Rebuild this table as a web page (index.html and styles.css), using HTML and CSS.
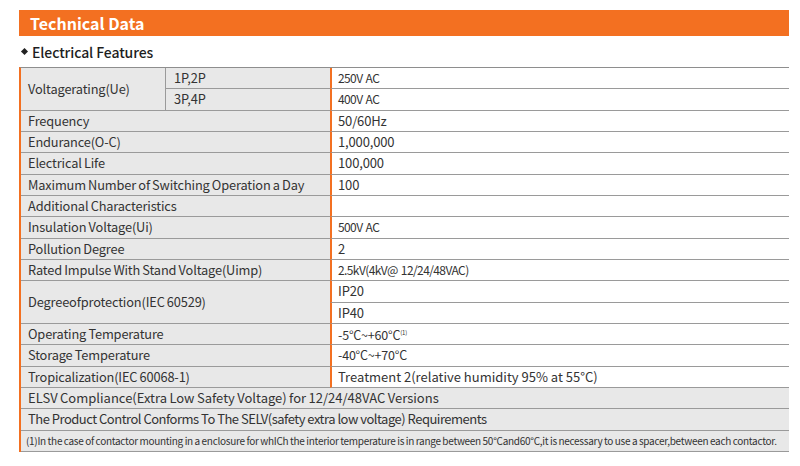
FILE: index.html
```html
<!DOCTYPE html>
<html>
<head>
<meta charset="utf-8">
<link rel="stylesheet" href="styles.css">
</head>
<body>
<div class="page">
  <div class="banner">Technical Data</div>
  <div class="subhead"><span class="diamond"></span>Electrical Features</div>
  <table class="spec">
    <colgroup>
      <col class="c1"><col class="c2"><col class="c3">
    </colgroup>
    <tr><td class="lbl" rowspan="2">Voltagerating(Ue)</td><td class="lbl sub">1P,2P</td><td class="val cond">250V AC</td></tr>
    <tr><td class="lbl sub">3P,4P</td><td class="val cond">400V AC</td></tr>
    <tr><td class="lbl" colspan="2">Frequency</td><td class="val">50/60Hz</td></tr>
    <tr><td class="lbl" colspan="2">Endurance(O-C)</td><td class="val">1,000,000</td></tr>
    <tr><td class="lbl" colspan="2">Electrical Life</td><td class="val">100,000</td></tr>
    <tr><td class="lbl" colspan="2">Maximum Number of Switching Operation a Day</td><td class="val">100</td></tr>
    <tr><td class="lbl" colspan="2">Additional Characteristics</td><td class="val"></td></tr>
    <tr><td class="lbl" colspan="2">Insulation Voltage(Ui)</td><td class="val cond">500V AC</td></tr>
    <tr><td class="lbl" colspan="2">Pollution Degree</td><td class="val">2</td></tr>
    <tr><td class="lbl" colspan="2">Rated Impulse With Stand Voltage(Uimp)</td><td class="val cond">2.5kV(4kV@ 12/24/48VAC)</td></tr>
    <tr><td class="lbl" colspan="2" rowspan="2">Degreeofprotection(IEC 60529)</td><td class="val">IP20</td></tr>
    <tr><td class="val">IP40</td></tr>
    <tr><td class="lbl" colspan="2">Operating Temperature</td><td class="val temp">-5°C~+60°C<sup>(1)</sup></td></tr>
    <tr><td class="lbl" colspan="2">Storage Temperature</td><td class="val temp">-40°C~+70°C</td></tr>
    <tr><td class="lbl" colspan="2">Tropicalization(IEC 60068-1)</td><td class="val big">Treatment 2(relative humidity 95% at 55°C)</td></tr>
    <tr><td class="lbl wide" colspan="3">ELSV Compliance(Extra Low Safety Voltage) for 12/24/48VAC Versions</td></tr>
    <tr><td class="lbl wide tight" colspan="3">The Product Control Conforms To The SELV(safety extra low voltage) Requirements</td></tr>
    <tr><td class="lbl note" colspan="3">(1)In the case of contactor mounting in a enclosure for whICh the interior temperature is in range between 50°Cand60°C,it is necessary to use a spacer,between each contactor.</td></tr>
  </table>
</div>
</body>
</html>
```
FILE: styles.css
```css
html, body {
  margin: 0;
  padding: 0;
  background: #ffffff;
}
body {
  font-family: "Noto Sans CJK SC", "Noto Sans", sans-serif;
  color: #333333;
}
.page {
  width: 770px;
  padding: 10px 0 0 19px;
}
.banner {
  background: #f37021;
  color: #ffffff;
  height: 26px;
  line-height: 26px;
  font-size: 16px;
  font-weight: 700;
  padding-left: 11px;
}
.subhead {
  display: flex;
  align-items: center;
  height: 31px;
  font-size: 14px;
  font-weight: 500;
  color: #1e1e1e;
  padding-left: 3px;
  letter-spacing: -0.1px;
}
.diamond {
  width: 5px;
  height: 5px;
  background: #222;
  transform: rotate(45deg);
  margin-right: 5px;
}
.spec {
  width: 770px;
  border-collapse: separate;
  border-spacing: 0;
  border-top: 1px solid #8e8e8e;
  border-left: 2px solid #f37021;
  table-layout: fixed;
}
.c1 { width: 144px; }
.c2 { width: 165px; }
.c3 { width: 459px; }
.spec td {
  height: 20.33px;
  padding: 0;
  border-bottom: 1px solid #9a9a9a;
  font-size: 12.8px;
  line-height: 16px;
  white-space: nowrap;
  vertical-align: middle;
  letter-spacing: -0.15px;
  word-spacing: -0.5px;
}
.lbl {
  background: #e8e8e8;
  padding-left: 7px !important;
}
.sub {
  border-left: 1px solid #9a9a9a;
  padding-left: 8px !important;
}
.val {
  background: #ffffff;
  border-left: 2px solid #f37021;
  padding-left: 6px !important;
  font-size: 13px !important;
  word-spacing: 0 !important;
}
.cond {
  font-size: 12px !important;
  letter-spacing: -0.6px !important;
  word-spacing: 1px !important;
}
.temp {
  font-size: 12.5px !important;
  letter-spacing: -0.2px !important;
}
.val sup {
  font-size: 6px;
  vertical-align: 5px;
}
.big {
  font-size: 13px !important;
  letter-spacing: 0 !important;
}
.wide {
  font-size: 13px !important;
  letter-spacing: 0 !important;
  word-spacing: -0.5px !important;
}
.tight {
  letter-spacing: -0.5px !important;
  word-spacing: 0 !important;
}
.note {
  font-size: 10px !important;
  letter-spacing: -0.28px !important;
  word-spacing: -0.3px !important;
  padding-left: 5px !important;
}
```
